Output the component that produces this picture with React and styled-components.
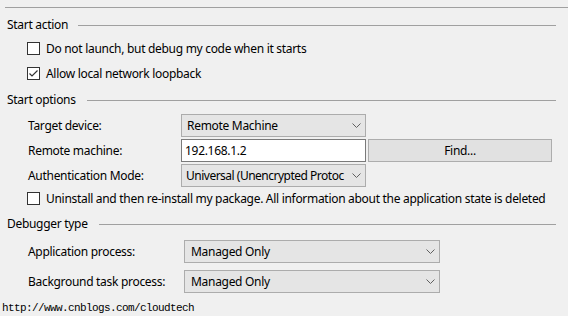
import React from "react";
import styled, { createGlobalStyle } from "styled-components";

const Global = createGlobalStyle`
  html, body { margin: 0; padding: 0; background: #f0f0f0; }
  body { width: 568px; height: 316px; overflow: hidden; }
  * { box-sizing: border-box; }
`;

const Page = styled.div`
  width: 568px;
  height: 316px;
  background: #f0f0f0;
  font-family: "Segoe UI", "Noto Sans", sans-serif;
  font-size: 12px;
  letter-spacing: -0.3px;
  color: #000;
  display: flex;
  flex-direction: column;
  padding-top: 7px;
`;

const TopRule = styled.div`
  height: 1px;
  margin-left: 5px;
  background: #a0a0a0;
`;

const Header = styled.div`
  display: flex;
  align-items: center;
  height: 16px;
  padding-left: 7px;
  margin-right: 12px;
  margin-top: ${(p) => p.$top}px;
  line-height: 16px;
  white-space: nowrap;
`;

const HeaderLine = styled.div`
  flex: 1;
  height: 1px;
  background: #a0a0a0;
  margin-left: ${(p) => p.$gap}px;
`;

const CheckRow = styled.label`
  display: flex;
  align-items: center;
  gap: 6px;
  height: 13px;
  padding-left: 27px;
  margin-top: ${(p) => p.$top}px;
  white-space: nowrap;
  line-height: 13px;
`;

const Box = styled.span`
  width: 13px;
  height: 13px;
  flex: none;
  background: #fff;
  border: 1px solid #333;
  display: flex;
  align-items: center;
  justify-content: center;
`;

const Grid = styled.div`
  display: grid;
  grid-template-columns: ${(p) => p.$cols};
  row-gap: ${(p) => p.$rowGap}px;
  column-gap: 2px;
  padding-left: 28px;
  margin-top: ${(p) => p.$top}px;
  align-items: center;
`;

const Label = styled.div`
  white-space: nowrap;
  line-height: 16px;
`;

const Select = styled.div`
  height: 23px;
  width: ${(p) => p.$w}px;
  background: #e5e5e5;
  border: 1px solid #acacac;
  display: flex;
  align-items: center;
  gap: 3px;
  padding-left: ${(p) => p.$pad}px;
  padding-right: 4px;
  white-space: nowrap;
  overflow: hidden;
`;

const SelectText = styled.span`
  flex: 1;
  min-width: 0;
  letter-spacing: ${(p) => (p.$tight ? "-0.5px" : "inherit")};
`;

const TextBox = styled.div`
  height: 23px;
  width: 185px;
  background: #fff;
  border: 1px solid #7a7a7a;
  display: flex;
  align-items: center;
  padding-left: 3px;
`;

const Button = styled.div`
  height: 23px;
  width: 184px;
  background: #e1e1e1;
  border: 1px solid #adadad;
  display: flex;
  align-items: center;
  justify-content: center;
`;

const Footer = styled.div`
  margin-top: ${(p) => p.$top}px;
  padding-left: 2px;
  font-family: "Liberation Mono", monospace;
  font-size: 11px;
  letter-spacing: -0.6px;
  line-height: 12px;
  color: #000;
`;

const Chevron = () => (
  <svg width="9" height="5" viewBox="0 0 9 5" style={{ flex: "none" }}>
    <path d="M0.5 0.5 L4.5 4.5 L8.5 0.5" fill="none" stroke="#606060" strokeWidth="1" />
  </svg>
);

const Check = () => (
  <svg width="11" height="11" viewBox="0 0 11 11">
    <path d="M1.5 5.5 L4 8 L9.5 2.5" fill="none" stroke="#333" strokeWidth="1.2" />
  </svg>
);

const Dropdown = ({ w, pad, tight, children }) => (
  <Select $w={w} $pad={pad}>
    <SelectText $tight={tight}>{children}</SelectText>
    <Chevron />
  </Select>
);

export default function App() {
  return (
    <Page>
      <Global />
      <TopRule />
      <Header $top={9}>
        Start action
        <HeaderLine $gap={10} />
      </Header>
      <CheckRow $top={9}>
        <Box />
        Do not launch, but debug my code when it starts
      </CheckRow>
      <CheckRow $top={12}>
        <Box>
          <Check />
        </Box>
        Allow local network loopback
      </CheckRow>
      <Header $top={12}>
        Start options
        <HeaderLine $gap={11} />
      </Header>
      <Grid $cols="151px 185px 184px" $rowGap={2} $top={6}>
        <Label>Target device:</Label>
        <Dropdown w={185} pad={5}>Remote Machine</Dropdown>
        <div />
        <Label>Remote machine:</Label>
        <TextBox>192.168.1.2</TextBox>
        <Button>Find...</Button>
        <Label>Authentication Mode:</Label>
        <Dropdown w={185} pad={4} tight>Universal (Unencrypted Protoc</Dropdown>
        <div />
      </Grid>
      <CheckRow $top={5}>
        <Box />
        Uninstall and then re-install my package. All information about the application state is deleted
      </CheckRow>
      <Header $top={11}>
        Debugger type
        <HeaderLine $gap={11} />
      </Header>
      <Grid $cols="154px 256px" $rowGap={7} $top={8}>
        <Label>Application process:</Label>
        <Dropdown w={256} pad={6}>Managed Only</Dropdown>
        <Label>Background task process:</Label>
        <Dropdown w={256} pad={6}>Managed Only</Dropdown>
      </Grid>
      <Footer $top={9}>http://www.cnblogs.com/cloudtech</Footer>
    </Page>
  );
}
